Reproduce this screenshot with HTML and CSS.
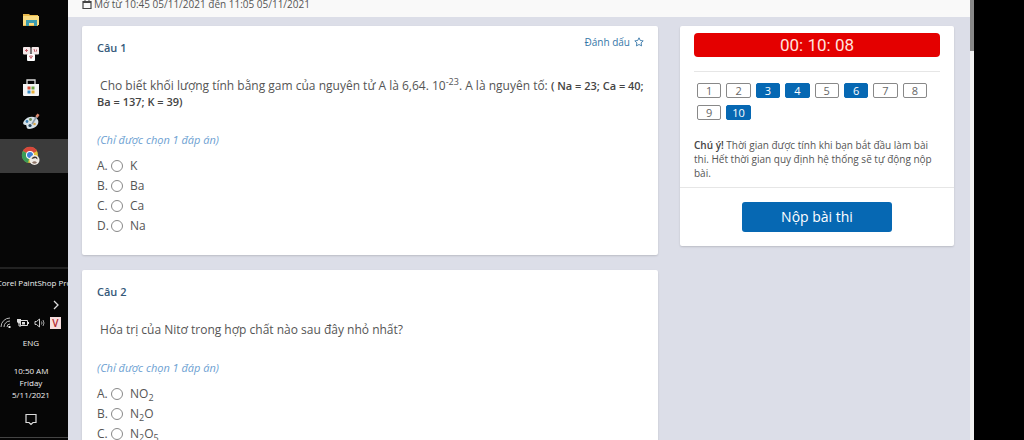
FILE: index.html
```
<!DOCTYPE html>
<html lang="vi">
<head>
  <meta charset="UTF-8">
  <meta name="viewport" content="width=device-width, initial-scale=1.0">
  <title>Bài thi</title>
  <link rel="stylesheet" href="styles.css">
</head>
<body>
  <aside class="taskbar">
    <div class="apps">
      <button type="button" class="app" aria-label="File Explorer">
        <svg width="18" height="16" viewBox="0 0 18 16"><path d="M1 2h6l1 1h8v11H1z" fill="#e9b94b"/><path d="M1 4h16v9H1z" fill="#f9dc83"/><path d="M4 8h11v6h-3v-3H7v3H4z" fill="#3c9cae"/></svg>
      </button>
      <button type="button" class="app" aria-label="Keyboard">
        <svg width="18" height="16" viewBox="0 0 18 16"><rect x="1" y="1" width="7.500" height="7.500" rx="1" fill="#f4e8e8"/><rect x="9.500" y="1" width="7.500" height="7.500" rx="1" fill="#f4e8e8"/><rect x="5" y="8" width="8" height="7" rx="1" fill="#fff"/><path d="M3 4.500h3M4.500 3v3M12 3l1 3M14.500 3.500v2M7.500 10h3l-1.500 2.500z" stroke="#c4606c" fill="none"/></svg>
      </button>
      <button type="button" class="app" aria-label="Microsoft Store">
        <svg width="18" height="20" viewBox="0 0 18 20"><path d="M5 6V2h8v4" fill="none" stroke="#ddd" stroke-width="1.300"/><path d="M1 6h16v11q0 1-1 1H2q-1 0-1-1z" fill="#f4f4f4"/><path d="M5.500 8.500h3v3h-3z" fill="#d8503a"/><path d="M9.500 8.500h3v3h-3z" fill="#6da544"/><path d="M5.500 12.500h3v3h-3z" fill="#368bc4"/><path d="M9.500 12.500h3v3h-3z" fill="#e9b03b"/></svg>
      </button>
      <button type="button" class="app" aria-label="Paint">
        <svg width="18" height="18" viewBox="0 0 18 18"><path d="M2 8c3-5 11-6 14-1 2 5-4 9-9 9-3 0-2-3-3-4-2 0-4-1-2-4z" fill="#d6e2ea"/><circle cx="5" cy="8.500" r="1.400" fill="#3d7fb0"/><circle cx="8.500" cy="6.500" r="1.400" fill="#6b8c54"/><circle cx="8" cy="12.500" r="1.600" fill="#26445c"/><circle cx="12.500" cy="11" r="1.300" fill="#d9a648"/><path d="M10 11l5-8" stroke="#8b9aa5" stroke-width="1.500"/><path d="M13.500 3l2-2.500 2 1.500-2 3z" fill="#d9876c"/></svg>
      </button>
      <button type="button" class="app active" aria-label="Chrome">
        <svg width="20" height="20" viewBox="0 0 20 20"><circle cx="9" cy="9" r="8" fill="#e5c33f"/><path d="M9 9L2 5a8 8 0 0 1 14 0z" fill="#d8483c"/><path d="M9 9L2 5a8 8 0 0 0 5 12z" fill="#3c9c57"/><circle cx="9" cy="9" r="4" fill="#fff"/><circle cx="9" cy="9" r="3" fill="#3f7fd6"/><circle cx="13.500" cy="14" r="5" fill="#efebe6"/><path d="M10.500 13q1-3 3.500-2.500 2.500 0 2.500 3l-2-1.500z" fill="#3b3431"/><path d="M11 16.500q2.500-2.500 5 0-2.500 2.500-5 0z" fill="#8d7468"/></svg>
      </button>
    </div>
    <div class="tray">
      <div class="toolbar-name"><span>Corel PaintShop Pro</span></div>
      <button type="button" class="more" aria-label="Show hidden icons">
        <svg width="8" height="10" viewBox="0 0 8 10"><path d="M2 1l4 4-4 4" fill="none" stroke="#ddd" stroke-width="1.300"/></svg>
      </button>
      <div class="status">
        <svg width="12" height="12" viewBox="0 0 12 12"><g fill="none" stroke="#bbb"><path d="M1 10A9 9 0 0 1 10 1M4 10a6 6 0 0 1 6-6M7 10a3 3 0 0 1 3-3"/></g><path d="M8.500 9h2v2h-2z" fill="#eee"/></svg>
        <svg width="13" height="12" viewBox="0 0 13 12"><path d="M4.500 3.500h7v5h-7z" fill="none" stroke="#ddd"/><path d="M6 5h3v2.500H6zM12 5h1v2h-1zM1 2h4v3L3.500 6.500h-1L1 5z" fill="#ddd"/><path d="M3 6v3h2" fill="none" stroke="#ddd"/></svg>
        <svg width="12" height="12" viewBox="0 0 12 12"><g fill="none" stroke="#ccc"><path d="M1 4.500h1.500l3-2.500v8l-3-2.500H1z"/><path d="M7.500 4.500q1 1.500 0 3M9 3q2 3 0 6" stroke-width=".8"/></g></svg>
        <span class="unikey">V</span>
      </div>
      <div class="lang">ENG</div>
      <div class="clock">10:50 AM<br>Friday<br>5/11/2021</div>
      <button type="button" class="notify" aria-label="Notifications">
        <svg width="12" height="13" viewBox="0 0 12 13"><path d="M1 1.500h10v8H8l-2 2-2-2H1z" fill="none" stroke="#ddd" stroke-width="1.200"/></svg>
      </button>
    </div>
  </aside>

  <div class="page">
    <header class="exam-time">
      <svg width="10" height="11" viewBox="0 0 10 11"><path d="M1 2.500h8v7H1z" fill="none" stroke="#444" stroke-width="1.200"/><path d="M1 2h8v2H1zM2.500 0h1v2h-1zM6.500 0h1v2h-1z" fill="#444"/></svg>
      <span>Mở từ 10:45 05/11/2021 đến 11:05 05/11/2021</span>
    </header>
    <main>
      <section class="questions">
        <article class="card question">
          <div class="question-head">
            <h2>Câu 1</h2>
            <a href="#" class="bookmark">Đánh dấu <svg width="10" height="10" viewBox="0 0 10 10"><path d="M5 .8l1.300 2.700 2.900.4-2.100 2 .5 3L5 7.500 2.400 8.900l.5-3-2.100-2 2.900-.4z" fill="none" stroke="#3576a8" stroke-width=".9"/></svg></a>
          </div>
          <p class="text">&nbsp;Cho biết khối lượng tính bằng gam của nguyên tử A là 6,64. 10<sup>-23</sup>. A là nguyên tố: <b>( Na = 23; Ca = 40; Ba = 137; K = 39)</b></p>
          <p class="hint">(Chỉ được chọn 1 đáp án)</p>
          <label class="option"><span>A.</span><input type="radio" name="q1">K</label>
          <label class="option"><span>B.</span><input type="radio" name="q1">Ba</label>
          <label class="option"><span>C.</span><input type="radio" name="q1">Ca</label>
          <label class="option"><span>D.</span><input type="radio" name="q1">Na</label>
        </article>
        <article class="card question">
          <div class="question-head">
            <h2>Câu 2</h2>
          </div>
          <p class="text">&nbsp;Hóa trị của Nitơ trong hợp chất nào sau đây nhỏ nhất?</p>
          <p class="hint">(Chỉ được chọn 1 đáp án)</p>
          <label class="option"><span>A.</span><input type="radio" name="q2"><span class="formula">NO<sub>2</sub></span></label>
          <label class="option"><span>B.</span><input type="radio" name="q2"><span class="formula">N<sub>2</sub>O</span></label>
          <label class="option"><span>C.</span><input type="radio" name="q2"><span class="formula">N<sub>2</sub>O<sub>5</sub></span></label>
        </article>
      </section>
      <aside class="card summary">
        <div class="summary-top">
          <div class="timer">00: 10: 08</div>
          <nav class="numbers">
            <button type="button">1</button>
            <button type="button">2</button>
            <button type="button" class="done">3</button>
            <button type="button" class="done">4</button>
            <button type="button">5</button>
            <button type="button" class="done">6</button>
            <button type="button">7</button>
            <button type="button">8</button>
            <button type="button">9</button>
            <button type="button" class="done">10</button>
          </nav>
          <p class="note"><b>Chú ý!</b> Thời gian được tính khi bạn bắt đầu làm bài thi. Hết thời gian quy định hệ thống sẽ tự động nộp bài.</p>
        </div>
        <div class="summary-bottom">
          <button type="submit" class="submit">Nộp bài thi</button>
        </div>
      </aside>
    </main>
  </div>
  <div class="scrollbar"><div class="thumb"></div></div>
  <div class="edge"></div>
</body>
</html>
```

FILE: styles.css
```
*{
  margin: 0;
  padding: 0;
  box-sizing: border-box;
}
body{
  display: flex;
  height: 100vh;
  overflow: hidden;
  background-color: #dcdee8;
  color: #555;
  font-family: 'Open Sans', sans-serif;
  font-size: 12px;
  line-height: 16px;
}
button{
  border: none;
  font-family: inherit;
  cursor: pointer;
}
svg{
  display: block;
}

/* taskbar */
.taskbar{
  display: flex;
  flex-direction: column;
  justify-content: space-between;
  flex: 0 0 68px;
  overflow: hidden;
  background-color: #060606;
  color: #f0f0f0;
  font-size: 8px;
  line-height: 12px;
  text-align: center;
}
.taskbar button{
  display: flex;
  align-items: center;
  justify-content: center;
  background: none;
}
.apps{
  padding-top: 3px;
}
.taskbar .app{
  width: 100%;
  height: 34px;
  padding-right: 6px;
}
.taskbar .active{
  background-color: #3b3b3b;
}
.tray{
  border-bottom: 1px solid #444;
  margin-bottom: 2px;
}
.toolbar-name{
  display: flex;
  justify-content: center;
  border-top: 2px solid #222;
  padding-top: 8px;
  white-space: nowrap;
}
.taskbar .more{
  margin: 10px 8px 0 auto;
  width: 8px;
  height: 12px;
}
.status{
  display: flex;
  align-items: center;
  justify-content: space-between;
  padding: 0 7px 0 0;
  margin-top: 6px;
}
.unikey{
  width: 11px;
  background-color: #f7dede;
  color: #b3262f;
  font-size: 10px;
  font-weight: 600;
}
.lang{
  margin-top: 8px;
  padding-right: 6px;
}
.clock{
  margin-top: 16px;
  padding-right: 6px;
}
.taskbar .notify{
  width: 100%;
  padding-right: 6px;
  margin: 12px 0 11px;
}

/* page */
.page{
  flex: 1;
  min-width: 0;
}
.exam-time{
  display: flex;
  align-items: center;
  gap: 2px;
  padding: 0 14px 9px;
  background-color: #f9f9f9;
  font-size: 10px;
  line-height: 8px;
}
.exam-time svg{
  flex-shrink: 0;
  margin: -2px 0;
}
main{
  display: flex;
  align-items: flex-start;
  gap: 22px;
  padding: 9px 16px 0 14px;
}
.questions{
  display: flex;
  flex-direction: column;
  gap: 15px;
  flex: 1;
}
.card{
  background-color: white;
  border-radius: 2px;
  box-shadow: 0 1px 2px rgba(0, 0, 0, 0.15);
}
.question{
  padding: 8px 8px 19px 15px;
}
.question-head{
  display: flex;
  justify-content: space-between;
  align-items: flex-start;
}
h2{
  padding-top: 4px;
  font-size: 11px;
  line-height: 20px;
  font-weight: 600;
  color: #34597a;
}
.bookmark{
  display: flex;
  align-items: center;
  gap: 4px;
  margin-right: 6px;
  color: #3576a8;
  font-size: 10px;
  text-decoration: none;
}
.text{
  margin-top: 20px;
}
b{
  font-weight: 600;
  color: #444;
}
.text b{
  font-size: 11px;
}
sup, sub{
  font-size: 9px;
  line-height: 0;
}
.hint{
  margin: 22px 0 8px;
  color: #6d9fd2;
  font-size: 11px;
  font-style: italic;
}
.option{
  display: flex;
  align-items: center;
  height: 20px;
}
.option > span:first-child{
  width: 14px;
}
.option input{
  appearance: none;
  width: 12px;
  height: 12px;
  margin-right: 7px;
  border: 1px solid #888;
  border-radius: 50%;
}

/* summary */
.summary{
  flex: 0 0 274px;
}
.summary-top{
  padding: 7px 14px;
  border-bottom: 1px solid #e6e6e6;
}
.timer{
  border-radius: 4px;
  background-color: #e40000;
  color: #ffe3df;
  font-family: Roboto, sans-serif;
  font-size: 17px;
  line-height: 24px;
  text-align: center;
}
.numbers{
  display: grid;
  grid-template-columns: repeat(8, 1fr);
  gap: 7px 5px;
  margin-top: 14px;
  padding: 11px 13px 0 3px;
  border-top: 1px solid #e6e6e6;
}
.numbers button{
  border: 1px solid #888;
  border-radius: 2px;
  background-color: white;
  color: #666;
  font-size: 11px;
  line-height: 13px;
}
.numbers .done{
  border-color: #0668b3;
  background-color: #0668b3;
  color: white;
}
.note{
  margin-top: 18px;
  font-size: 10px;
  line-height: 14px;
}
.summary-bottom{
  display: flex;
  justify-content: center;
  padding: 14px;
}
.submit{
  width: 150px;
  border-radius: 3px;
  background-color: #0668b3;
  color: white;
  font-size: 14px;
  line-height: 30px;
}

/* right side of the window */
.scrollbar{
  flex: 0 0 4px;
  background-color: #f1f1f1;
}
.thumb{
  height: 51px;
  background-color: #888;
}
.edge{
  flex: 0 0 50px;
  background-color: black;
}
```
